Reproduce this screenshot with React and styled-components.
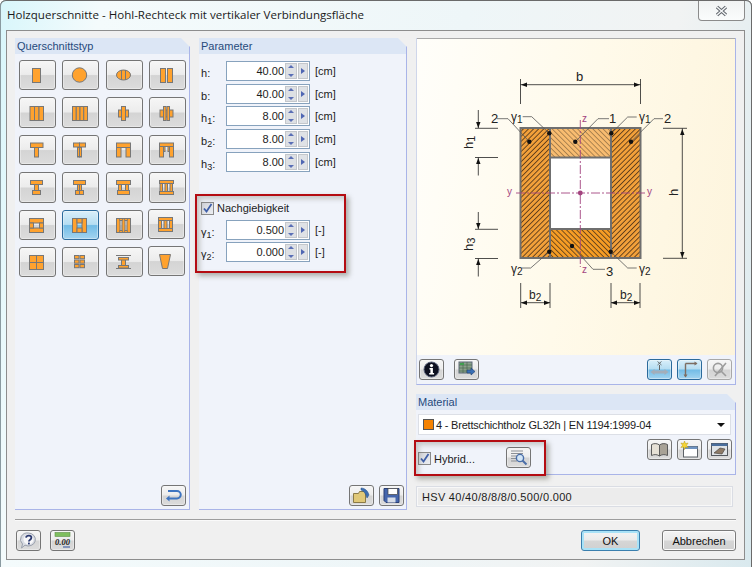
import styled, { createGlobalStyle } from "styled-components";

const GlobalStyle = createGlobalStyle`
  html, body { margin: 0; padding: 0; background: #fff; }
  body { font-family: "Liberation Sans", Arial, sans-serif; font-size: 11px; color: #1c1c1c; }
`;

const Window = styled.div`
  width: 752px;
  height: 567px;
  box-sizing: border-box;
  padding: 0 7px 7px 6px;
  display: flex;
  flex-direction: column;
  overflow: hidden;
  border-radius: 6px 6px 0 0;
  box-shadow: inset 0 1px 0 #6a6a6a, inset 1px 0 0 #8a9aa0, inset -1px 0 0 #6a6a6a;
  background: linear-gradient(100deg, #d8f6fb 0%, #f4fbfc 12%, #eef6f8 55%, #f1f3f3 80%, #d9e9ee 100%);
`;

const TitleBar = styled.div`
  height: 30px;
  flex: none;
  display: flex;
  align-items: flex-start;
  justify-content: space-between;
`;

const Title = styled.div`
  font-family: "Open Sans", "Noto Sans", sans-serif;
  font-size: 11.55px;
  line-height: 30px;
  margin-left: 1px;
  color: #1a1a1a;
`;

const CloseButton = styled.div`
  width: 45px;
  height: 19px;
  margin-top: 1px;
  display: flex;
  align-items: center;
  justify-content: center;
  border: 1px solid #8b8b8b;
  border-top: 0;
  border-radius: 0 0 4px 4px;
  background: linear-gradient(180deg, #f1f3f3, #fafcfc);
`;

const Content = styled.div`
  flex: 1;
  box-sizing: border-box;
  border: 1px solid #8d8d8d;
  background: #f0f0f0;
  padding: 7px 8px 8px;
  display: flex;
  flex-direction: column;
`;

const Columns = styled.div`
  height: 472px;
  display: grid;
  grid-template-columns: 175px 208px 320px;
  column-gap: 9px;
`;

const Panel = styled.section`
  position: relative;
  display: flex;
  flex-direction: column;
  min-height: 0;
  height: ${(p) => p.$h || "auto"};
  margin-top: ${(p) => p.$mt || 0}px;
`;

const PanelHead = styled.div`
  height: 16px;
  box-sizing: border-box;
  padding-left: 2px;
  line-height: 17px;
  color: #274a7c;
  background: #dce6f5;
  border-right: 1px solid #a9b4e8;
  clip-path: polygon(0 0, calc(100% - 9px) 0, 100% 9px, 100% 100%, 0 100%);
`;

const PanelBody = styled.div`
  flex: 1;
  display: flex;
  flex-direction: column;
  background: #f0f3fa;
  border-right: 1px solid #a9b4e8;
  border-bottom: 1px solid #a9b4e8;
  border-left: ${(p) => (p.$edge ? "1px solid #cfd6ea" : "0")};
  padding: ${(p) => p.$pad || "0"};
`;

const SectionGrid = styled.div`
  display: grid;
  grid-template-columns: repeat(4, 37px);
  grid-auto-rows: 30.4px;
  column-gap: 6.3px;
  row-gap: 7px;
`;

const ToolButton = styled.button`
  box-sizing: border-box;
  width: ${(p) => p.$w || 25}px;
  height: ${(p) => p.$h || 21}px;
  padding: 0;
  margin: ${(p) => p.$m || "0"};
  display: flex;
  align-items: center;
  justify-content: center;
  flex: none;
  border-radius: 3px;
  border: 1px solid ${(p) => (p.$active ? "#2b6a9c" : p.$faded ? "#a8a8a8" : "#757575")};
  box-shadow: inset 0 0 0 1px #fafafa66;
  background: ${(p) =>
    p.$active
      ? "linear-gradient(180deg, #d9effa 0%, #b5ddf2 48%, #72bce6 52%, #a3d4f0 100%)"
      : "linear-gradient(180deg, #f6f6f6 0%, #ececec 48%, #d4d4d4 52%, #dcdcdc 100%)"};
`;

const Foot = styled.div`
  margin-top: auto;
  display: flex;
  justify-content: flex-end;
  gap: 5px;
  padding: 0 ${(p) => p.$right || 3}px 3px 0;
`;

const Fields = styled.div`
  display: flex;
  flex-direction: column;
  gap: 2.7px;
`;

const FieldRow = styled.div`
  display: grid;
  grid-template-columns: 25px 84px auto;
  align-items: center;
  height: 20px;
`;

const Label = styled.span`
  padding-top: 4px;
  sub { font-size: 9px; line-height: 0; vertical-align: -2px; }
`;

const Unit = styled.span`
  margin-left: 5px;
`;

const Field = styled.div`
  box-sizing: border-box;
  height: 20px;
  display: flex;
  align-items: center;
  background: #fff;
  border: 1px solid #87a2bd;
`;

const Value = styled.span`
  width: 57px;
  text-align: right;
  flex: none;
`;

const Spin = styled.div`
  margin-left: 1px;
  width: 12px;
  height: 16px;
  display: flex;
  flex-direction: column;
  justify-content: space-between;
  border: 1px solid #c4c7cb;
  background: #dde0e4;
  align-items: center;
  padding: 1px 0;
  box-sizing: border-box;
`;

const SpinArrow = styled.i`
  width: 0;
  height: 0;
  border-left: 3px solid transparent;
  border-right: 3px solid transparent;
  ${(p) => (p.$down ? "border-top: 3px solid #5a6fb5;" : "border-bottom: 3px solid #5a6fb5;")}
`;

const Step = styled.div`
  margin-left: 1px;
  width: 10px;
  height: 16px;
  box-sizing: border-box;
  border: 1px solid #c4c7cb;
  background: #dfe2e6;
  display: flex;
  align-items: center;
  justify-content: center;
  &::before {
    content: "";
    border-top: 3px solid transparent;
    border-bottom: 3px solid transparent;
    border-left: 4px solid #4f66b3;
  }
`;

const CheckRow = styled.label`
  display: flex;
  align-items: center;
  gap: 3px;
  height: 13px;
  width: ${(p) => (p.$w ? `${p.$w}px` : "auto")};
  flex: none;
  margin: ${(p) => p.$m || "0"};
`;

const Box = styled.span`
  width: 13px;
  height: 13px;
  box-sizing: border-box;
  display: block;
  flex: none;
  border: 1px solid #8a8a8a;
  background: linear-gradient(135deg, #d2d4da, #eceef2);
`;

const Highlight = styled.div`
  position: absolute;
  box-sizing: border-box;
  left: ${(p) => p.$l}px;
  top: ${(p) => p.$t}px;
  width: ${(p) => p.$w}px;
  height: ${(p) => p.$h}px;
  border: 2px solid #b40c12;
  box-shadow: 3px 3px 5px rgba(70, 70, 50, 0.4), inset 3px 3px 5px rgba(70, 70, 50, 0.25);
  pointer-events: none;
`;

const Preview = styled.div`
  height: 317px;
  border-top: 1px solid #a9a9a9;
  box-sizing: border-box;
  background: linear-gradient(100deg, #fffefa 0%, #fffaea 50%, #fdf4dc 100%);
  svg { display: block; }
`;

const PreviewTools = styled.div`
  display: flex;
  padding: 4px 3px 0 2px;
`;

const ToolGroup = styled.div`
  display: flex;
  gap: ${(p) => p.$gap || 5}px;
  margin-left: ${(p) => (p.$end ? "auto" : "0")};
`;

const Select = styled.div`
  margin: 4px 4px 0 2px;
  height: 21px;
  box-sizing: border-box;
  display: flex;
  align-items: center;
  padding: 0 4px;
  background: #fff;
  border: 1px solid #dcdfe6;
  letter-spacing: -0.2px;
`;

const Swatch = styled.span`
  width: 11px;
  height: 11px;
  background: #f58200;
  border: 1px solid #555;
  box-sizing: border-box;
  margin-right: 2px;
`;

const Caret = styled.span`
  margin-left: auto;
  margin-right: 1px;
  border-left: 4px solid transparent;
  border-right: 4px solid transparent;
  border-top: 4px solid #111;
`;

const MaterialRow = styled.div`
  display: flex;
  margin: 4px 3px 0 2px;
  height: 29px;
`;

const HybridPart = styled.div`
  display: flex;
  flex: 1;
  align-items: flex-start;
`;

const Summary = styled.div`
  margin: 11px 3px 0 0;
  height: 21px;
  box-sizing: border-box;
  display: flex;
  align-items: center;
  padding-left: 5px;
  background: #ececec;
  border: 1px solid #dadde4;
  box-shadow: inset 0 0 0 1px #f8f8f8;
  letter-spacing: 0.3px;
`;

const Separator = styled.div`
  margin-top: 9px;
  height: 1px;
  background: #9d9d9d;
  border-bottom: 1px solid #fafafa;
`;

const Footer = styled.div`
  margin-top: 9px;
  display: flex;
  align-items: center;
  padding-left: 1px;
  gap: 9px;
`;

const DialogButton = styled.button`
  box-sizing: border-box;
  height: 21px;
  width: ${(p) => p.$w}px;
  margin-left: ${(p) => p.$ml || 0};
  font-family: "Liberation Sans", Arial, sans-serif;
  font-size: 11px;
  color: #111;
  padding: 0;
  border-radius: 3px;
  border: 1px solid ${(p) => (p.$primary ? "#3a7fae" : "#7b7b7b")};
  box-shadow: ${(p) => (p.$primary ? "inset 0 0 0 2px #a9e2f7" : "inset 0 0 0 1px #fbfbfb")};
  background: linear-gradient(180deg, #f4f4f4 0%, #ebebeb 48%, #d6d6d6 52%, #d0d0d0 100%);
`;

const ORANGE = "#ffa22e";
const GREY = "#777";

const rects = (list, fill = ORANGE) =>
  list.map(([x, y, w, h], i) => (
    <rect key={i} x={x} y={y} width={w} height={h} fill={fill} stroke={GREY} strokeWidth="1" />
  ));

const SECTIONS = [
  { draw: rects([[13.5, 8.5, 8, 14]]) },
  { draw: <circle cx="17.5" cy="15" r="7.2" fill={ORANGE} stroke={GREY} /> },
  {
    draw: (
      <>
        <ellipse cx="17.5" cy="15" rx="7" ry="5" fill={ORANGE} stroke={GREY} />
        <path d="M15.5 10v10M19.5 10v10" stroke={GREY} />
      </>
    ),
  },
  { draw: rects([[11.5, 8.5, 5, 14], [18.5, 8.5, 5, 14]]) },
  { draw: rects([[11, 8.5, 4.5, 14], [15.5, 8.5, 4.5, 14], [20, 8.5, 4.5, 14]]) },
  { draw: rects([[10.5, 8.5, 3.75, 14], [14.25, 8.5, 3.75, 14], [18, 8.5, 3.75, 14], [21.75, 8.5, 3.75, 14]]) },
  { draw: rects([[12.5, 12, 10, 7], [15.5, 8.5, 4, 14]]) },
  { draw: rects([[11, 12, 13, 7], [14.5, 8.5, 2.5, 14], [18, 8.5, 2.5, 14]]) },
  { draw: rects([[15.5, 12, 4, 10], [11.5, 8, 12.5, 4.5]]) },
  { draw: rects([[15.5, 12, 2, 10], [17.5, 12, 2, 10], [11.5, 8, 6, 4], [17.5, 8, 6, 4]]) },
  { draw: rects([[10.5, 12, 4.5, 10], [20, 12, 4.5, 10], [10.5, 8, 14, 4.5]]) },
  { draw: rects([[10.5, 11.5, 4, 10.5], [20.5, 11.5, 4, 10.5], [14.5, 11.5, 1.5, 5], [19, 11.5, 1.5, 5], [10.5, 8, 14, 3.5]]) },
  { draw: rects([[15.5, 12.5, 4, 6], [11.5, 8.5, 12, 4], [13.5, 18.5, 8, 4]]) },
  { draw: rects([[15.5, 12.5, 2, 6], [17.5, 12.5, 2, 6], [11.5, 8.5, 12, 4], [13.5, 18.5, 4, 4], [17.5, 18.5, 4, 4]]) },
  { draw: rects([[12.5, 12.5, 3, 6], [19.5, 12.5, 3, 6], [10.5, 8.5, 14, 4], [11.5, 18.5, 12, 4]]) },
  { draw: rects([[11, 11.5, 2.5, 8], [16, 11.5, 2.5, 8], [21, 11.5, 2.5, 8], [10.5, 8.5, 14, 3], [10.5, 19.5, 14, 3]]) },
  { draw: rects([[10.5, 8.5, 14, 4.5], [10.5, 18, 14, 4.5], [10.5, 13, 4, 5], [20.5, 13, 4, 5]]) },
  { draw: rects([[10.5, 8.5, 4.5, 14], [20, 8.5, 4.5, 14], [15, 8.5, 5, 4.5], [15, 18, 5, 4.5]]), active: true },
  { draw: rects([[10.5, 8.5, 3.5, 14], [21, 8.5, 3.5, 14], [16, 8.5, 3, 14], [14, 8.5, 2, 2], [19, 8.5, 2, 2], [14, 20.5, 2, 2], [19, 20.5, 2, 2]]) },
  { draw: rects([[10.5, 8.5, 14, 3], [10.5, 19.5, 14, 3], [10.5, 11.5, 3, 8], [16, 11.5, 3, 8], [21.5, 11.5, 3, 8]]), nudge: true },
  { draw: rects([[10.5, 8.5, 7, 7], [17.5, 8.5, 7, 7], [10.5, 15.5, 7, 7], [17.5, 15.5, 7, 7]]) },
  { draw: rects([[12.5, 8.5, 4.5, 3.2], [18, 8.5, 4.5, 3.2], [12.5, 13, 4.5, 3.2], [18, 13, 4.5, 3.2], [12.5, 17.5, 4.5, 3.2], [18, 17.5, 4.5, 3.2]]) },
  {
    draw: (
      <>
        {rects([[15.5, 11.5, 4, 8], [12.5, 10.5, 10, 2.5], [12.5, 18.5, 10, 2.5]])}
        <path d="M10 8.5h15M10 21.5h15" stroke={GREY} />
      </>
    ),
  },
  { draw: <path d="M11.5 8.5H22.5L19.5 22.5H14.5Z" fill={ORANGE} stroke={GREY} />, nudge: true },
];

const Icon = ({ children }) => (
  <svg width="19" height="17" viewBox="0 0 19 17">
    {children}
  </svg>
);

const InfoIcon = () => (
  <Icon>
    <circle cx="9.5" cy="8.5" r="7.5" fill="#0d1020" stroke="#59617a" />
    <circle cx="9.5" cy="4.6" r="1.6" fill="#fff" />
    <path d="M7.5 7h3.4v5h1.2v1.6H7.2V12h1.2V8.6H7.5z" fill="#fff" />
  </Icon>
);

const TableIcon = () => (
  <Icon>
    <rect x="2" y="1" width="13" height="11" fill="#8aa08a" stroke="#5e6a78" />
    <path d="M2 4h13M2 7h13M2 10h13M6 1v11M10 1v11" stroke="#4a6a52" strokeWidth=".7" />
    <rect x="3" y="2" width="4" height="2" fill="#3f9f4f" />
    <path d="M10 9h4v-2l4 3.5-4 3.5v-2h-4z" fill="#3a6fb5" stroke="#1f3f70" strokeWidth=".6" />
  </Icon>
);

const AxisIcon = () => (
  <Icon>
    <path d="M3 11h13" stroke="#a3aeba" strokeWidth="3" />
    <path d="M0.5 11l4-3v6zM18.5 11l-4-3v6z" fill="#a3aeba" />
    <path d="M9.5 4v5" stroke="#666" />
    <path d="M7.5 0.5l4 3.5M11.5 0.5l-4 3.5" stroke="#555" strokeWidth=".8" />
  </Icon>
);

const DimIcon = () => (
  <Icon>
    <path d="M5.5 2.5h11M5.5 2.5v13" stroke="#7c6d62" strokeWidth="1.4" />
    <path d="M17.5 2.5l-3-2v4zM5.5 16.5l-2-3h4z" fill="#7c6d62" />
  </Icon>
);

const OffIcon = () => (
  <Icon>
    <circle cx="8" cy="7" r="4.6" fill="none" stroke="#9c9c9c" strokeWidth="1.6" />
    <path d="M11 10l5 5M5 15L16 2" stroke="#9c9c9c" strokeWidth="1.6" />
  </Icon>
);

const BookIcon = () => (
  <Icon>
    <path d="M1.5 3.5c3-1.5 6-1 8 .5v11c-2-1.5-5-2-8-.5z" fill="#e6e1d6" stroke="#5a5a5a" />
    <path d="M17.5 3.5c-3-1.5-6-1-8 .5v11c2-1.5 5-2 8-.5z" fill="#a8a296" stroke="#5a5a5a" />
  </Icon>
);

const NewIcon = () => (
  <Icon>
    <rect x="3.5" y="5.5" width="14" height="10.5" fill="#fff" stroke="#5d6268" />
    <rect x="3.5" y="5.5" width="14" height="2.5" fill="#6f93c0" />
    <path d="M4.5 0l1 2.6 2.6-.6-1.6 2.3 1.6 2.3-2.6-.6-1 2.6-1-2.6-2.6.6 1.6-2.3L.9 2l2.6.6z" fill="#f7d634" stroke="#b59a1c" strokeWidth=".5" />
  </Icon>
);

const EditIcon = () => (
  <Icon>
    <rect x="1.5" y="2.5" width="16" height="12" fill="#dfe3e6" stroke="#55595e" />
    <rect x="1.5" y="2.5" width="16" height="2.5" fill="#4a6e9c" />
    <path d="M4 12l6-5 5 1-3 5z" fill="#8d7a66" stroke="#3f3a35" strokeWidth=".6" />
  </Icon>
);

const SearchIcon = () => (
  <Icon>
    <path d="M2 2h12M2 4.5h12M2 7h6M2 9.5h5M2 12h6" stroke="#8b8f95" />
    <circle cx="11" cy="9" r="3.6" fill="#d3e6f7" stroke="#4a6ea8" strokeWidth="1.4" />
    <path d="M13.5 11.5l4 4" stroke="#4a6ea8" strokeWidth="2" />
  </Icon>
);

const ReturnIcon = () => (
  <Icon>
    <path d="M4 4h9a3.6 3.6 0 0 1 0 7.5H4" fill="none" stroke="#3e74c0" strokeWidth="2" />
    <path d="M5.5 8.5L2 11.5l3.5 3z" fill="#3e74c0" />
  </Icon>
);

const FolderIcon = () => (
  <Icon>
    <path d="M1.5 6.5h5l1-2h6v11h-12z" fill="#e0c878" stroke="#8a7a48" />
    <path d="M9 1c4 0 7 3 8 7l-2 3c-1-4-3-7-6-8z" fill="#3c6db0" stroke="#25508a" strokeWidth=".5" />
  </Icon>
);

const SaveIcon = () => (
  <Icon>
    <path d="M2 1.5h15v14H4l-2-2z" fill="#4566ad" stroke="#2a3f75" />
    <rect x="6" y="1.5" width="9.5" height="6" fill="#fff" stroke="#444" strokeWidth=".7" />
    <rect x="5.5" y="10.5" width="8" height="5" fill="#d7dde8" />
  </Icon>
);

const HelpIcon = () => (
  <Icon>
    <path d="M9.5 1a7 6.5 0 1 1-3.5 12.2L2.5 16l1-4A7 6.5 0 0 1 9.5 1z" fill="#d9dce3" stroke="#9aa0ac" />
    <circle cx="9.5" cy="7.5" r="5" fill="#f7f7f9" />
    <path d="M7 5.6c.5-2.6 5.4-2.6 5.4.2 0 2-2.5 2-2.5 3.7" fill="none" stroke="#2b3a70" strokeWidth="1.8" />
    <rect x="9" y="10.6" width="1.8" height="1.8" fill="#2b3a70" />
  </Icon>
);

const DecimalsIcon = () => (
  <Icon>
    <rect x="2" y="0.5" width="15" height="4" fill="#7fbf5f" stroke="#5f8f48" strokeWidth=".6" />
    <text x="2" y="13" fontFamily="Liberation Serif, serif" fontStyle="italic" fontWeight="700" fontSize="8.5" fill="#222">0.00</text>
    <path d="M10 15h7" stroke="#2b4f9c" />
  </Icon>
);

const Checkbox = () => (
  <Box>
    <svg width="11" height="11" viewBox="0 0 11 11">
      <path d="M2 5.5l2.5 3L9.5 1" fill="none" stroke="#3f5fa8" strokeWidth="1.8" />
    </svg>
  </Box>
);

const SpinField = ({ label, sub, value, unit }) => (
  <FieldRow>
    <Label>
      {label}
      {sub && <sub>{sub}</sub>}:
    </Label>
    <Field>
      <Value>{value}</Value>
      <Spin>
        <SpinArrow />
        <SpinArrow $down />
      </Spin>
      <Step />
    </Field>
    <Unit>{unit}</Unit>
  </FieldRow>
);

const DIMENSIONS = [
  { label: "h", value: "40.00" },
  { label: "b", value: "40.00" },
  { label: "h", sub: "1", value: "8.00" },
  { label: "b", sub: "2", value: "8.00" },
  { label: "h", sub: "3", value: "8.00" },
];

const Dot = ({ x, y }) => <circle cx={x} cy={y} r="2.2" fill="#111" />;

const Leader = ({ d }) => <path d={d} fill="none" stroke="#555" strokeWidth=".8" />;

const ArrowH = ({ x, y, dir }) => <path d={`M${x} ${y}l${-6 * dir} -2.2v4.4z`} fill="#111" />;
const ArrowV = ({ x, y, dir }) => <path d={`M${x} ${y}l-2.2 ${-6 * dir}h4.4z`} fill="#111" />;

const Sym = ({ x, y, c, s, color = "#222", size = 12 }) => (
  <text x={x} y={y} fontFamily="Liberation Sans, sans-serif" fontSize={size} fill={color}>
    {c}
    {s && <tspan fontSize={size - 2} dy="1.5">{s}</tspan>}
  </text>
);

const Diagram = () => (
  <svg width="318" height="316" viewBox="417 39 318 316">
    <defs>
      <pattern id="hatchSide" patternUnits="userSpaceOnUse" width="3.6" height="3.6" patternTransform="rotate(45)">
        <rect width="3.6" height="3.6" fill="#f2a03a" />
        <rect width=".8" height="3.6" fill="#4a3018" />
      </pattern>
      <pattern id="hatchTop" patternUnits="userSpaceOnUse" width="3.6" height="3.6" patternTransform="rotate(-45)">
        <rect width="3.6" height="3.6" fill="#f8bc70" />
        <rect width=".8" height="3.6" fill="#9c7848" />
      </pattern>
      <pattern id="hatchBottom" patternUnits="userSpaceOnUse" width="3.6" height="3.6" patternTransform="rotate(-45)">
        <rect width="3.6" height="3.6" fill="#f59c24" />
        <rect width=".8" height="3.6" fill="#553a1c" />
      </pattern>
    </defs>

    <rect x="521" y="128.5" width="29" height="129" fill="url(#hatchSide)" />
    <rect x="611" y="128.5" width="29" height="129" fill="url(#hatchSide)" />
    <rect x="550" y="128.5" width="61" height="29" fill="url(#hatchTop)" />
    <rect x="550" y="229" width="61" height="29" fill="url(#hatchBottom)" />
    <rect x="550" y="157.5" width="61" height="71.5" fill="#fff" />
    <path d="M520.5 128h120v130h-120zM550 128v130M611 128v130M550 157.5h61M550 229h61" fill="none" stroke="#6f6f6f" strokeWidth="2" />

    <path d="M580.3 120V267M516 193h129" stroke="#a3437f" strokeWidth=".9" strokeDasharray="9 2 2 2" fill="none" />
    <circle cx="580.3" cy="193" r="2.4" fill="#a3437f" />
    <Sym x="507" y="195" c="y" color="#a3437f" size={10} />
    <Sym x="647" y="195" c="y" color="#a3437f" size={10} />
    <Sym x="582" y="122" c="z" color="#a3437f" size={10} />
    <Sym x="582" y="273" c="z" color="#a3437f" size={10} />

    <path d="M520.5 79v25M640.5 79v25M520.5 84.7h120" stroke="#222" strokeWidth=".8" fill="none" />
    <ArrowH x={521} y={84.7} dir={-1} />
    <ArrowH x={640} y={84.7} dir={1} />
    <Sym x="576" y="81" c="b" size={13} />

    <path d="M478.3 110v18M478.3 157.5v18M475 128.3h23M475 157.5h23M478.3 212v17M478.3 258.5v18M475 229.3h23M475 258.5h23" stroke="#222" strokeWidth=".8" fill="none" />
    <ArrowV x={478.3} y={128} dir={1} />
    <ArrowV x={478.3} y={158} dir={-1} />
    <ArrowV x={478.3} y={229} dir={1} />
    <ArrowV x={478.3} y={259} dir={-1} />
    <g transform="translate(473 149) rotate(-90)"><Sym x="0" y="0" c="h" s="1" size={13} /></g>
    <g transform="translate(473 251) rotate(-90)"><Sym x="0" y="0" c="h" s="3" size={13} /></g>

    <path d="M663 128.3h24M663 258.3h24M682.3 128.3v130" stroke="#222" strokeWidth=".8" fill="none" />
    <ArrowV x={682.3} y={129} dir={-1} />
    <ArrowV x={682.3} y={258} dir={1} />
    <g transform="translate(678 196) rotate(-90)"><Sym x="0" y="0" c="h" size={13} /></g>

    <path d="M520.7 283v25M550 283v25M611 283v25M640 283v25M521 302.7h29M611 302.7h29" stroke="#222" strokeWidth=".8" fill="none" />
    <ArrowH x={521} y={302.7} dir={-1} />
    <ArrowH x={550} y={302.7} dir={1} />
    <ArrowH x={611} y={302.7} dir={-1} />
    <ArrowH x={640} y={302.7} dir={1} />
    <Sym x="529" y="299" c="b" s="2" size={12} />
    <Sym x="620" y="299" c="b" s="2" size={12} />

    <Leader d="M497 118.7h11L529.3 141.7" />
    <Dot x={529.3} y={141.7} />
    <Sym x="491" y="123" c="2" size={13} />
    <Leader d="M522.7 116.7h9L549.3 133.3" />
    <Dot x={549.3} y={133.3} />
    <Sym x="511" y="121" c="γ" s="1" size={12} />
    <Leader d="M609 118.7h-11L575.3 141.7" />
    <Dot x={575.3} y={141.7} />
    <Sym x="609" y="123" c="1" size={13} />
    <Leader d="M636.7 117h-9L611.3 133.3" />
    <Dot x={611.3} y={133.3} />
    <Sym x="639" y="121" c="γ" s="1" size={12} />
    <Leader d="M663 118.7h-9L631 141.7" />
    <Dot x={631} y={141.7} />
    <Sym x="664" y="123" c="2" size={13} />

    <Leader d="M521.7 268h9L549.3 251.7" />
    <Dot x={549.3} y={251.7} />
    <Sym x="511" y="273" c="γ" s="2" size={12} />
    <Leader d="M636.7 268h-9L610.7 251.7" />
    <Dot x={610.7} y={251.7} />
    <Sym x="639" y="273" c="γ" s="2" size={12} />
    <Leader d="M605 269.3h-12L572 246" />
    <Dot x={572} y={246} />
    <Sym x="606" y="276" c="3" size={13} />
  </svg>
);

const App = () => (
  <Window>
    <GlobalStyle />
    <TitleBar>
      <Title>Holzquerschnitte - Hohl-Rechteck mit vertikaler Verbindungsfläche</Title>
      <CloseButton>
        <svg width="13" height="12" viewBox="0 0 13 12">
          <path d="M2 2l9 8M11 2l-9 8" stroke="#62676e" strokeWidth="3.4" />
          <path d="M2 2l9 8M11 2l-9 8" stroke="#f4f6f7" strokeWidth="1.4" />
        </svg>
      </CloseButton>
    </TitleBar>
    <Content>
      <Columns>
        <Panel>
          <PanelHead>Querschnittstyp</PanelHead>
          <PanelBody $pad="6px 0 0 4px">
            <SectionGrid>
              {SECTIONS.map((s, i) => (
                <ToolButton key={i} $w={37} $h={30.4} $active={s.active} $m={s.nudge ? "-1px 0 0 -1px" : "0"}>
                  <svg width="35" height="28" viewBox="1 1 35 28">
                    {s.draw}
                  </svg>
                </ToolButton>
              ))}
            </SectionGrid>
            <Foot>
              <ToolButton>
                <ReturnIcon />
              </ToolButton>
            </Foot>
          </PanelBody>
        </Panel>

        <Panel>
          <PanelHead>Parameter</PanelHead>
          <PanelBody $pad="7px 0 0 2px">
            <Fields>
              {DIMENSIONS.map((d, i) => (
                <SpinField key={i} {...d} unit="[cm]" />
              ))}
            </Fields>
            <CheckRow $m="30px 0 5px">
              <Checkbox />
              Nachgiebigkeit
            </CheckRow>
            <Fields>
              <SpinField label="γ" sub="1" value="0.500" unit="[-]" />
              <SpinField label="γ" sub="2" value="0.000" unit="[-]" />
            </Fields>
            <Foot $right={2}>
              <ToolButton>
                <FolderIcon />
              </ToolButton>
              <ToolButton>
                <SaveIcon />
              </ToolButton>
            </Foot>
          </PanelBody>
          <Highlight $l={-4} $t={156} $w={151} $h={79} />
        </Panel>

        <div>
          <Panel $h="347px">
            <PanelBody $edge>
              <Preview>
                <Diagram />
              </Preview>
              <PreviewTools>
                <ToolGroup $gap={10}>
                  <ToolButton>
                    <InfoIcon />
                  </ToolButton>
                  <ToolButton>
                    <TableIcon />
                  </ToolButton>
                </ToolGroup>
                <ToolGroup $end>
                  <ToolButton $active>
                    <AxisIcon />
                  </ToolButton>
                  <ToolButton $active>
                    <DimIcon />
                  </ToolButton>
                  <ToolButton $faded>
                    <OffIcon />
                  </ToolButton>
                </ToolGroup>
              </PreviewTools>
            </PanelBody>
          </Panel>

          <Panel $h="81px" $mt={9}>
            <PanelHead>Material</PanelHead>
            <PanelBody>
              <Select>
                <Swatch />4 - Brettschichtholz GL32h | EN 1194:1999-04
                <Caret />
              </Select>
              <MaterialRow>
                <HybridPart>
                  <CheckRow $w={88} $m="13px 0 0">
                    <Checkbox />
                    Hybrid...
                  </CheckRow>
                  <ToolButton $m="8px 0 0 0">
                    <SearchIcon />
                  </ToolButton>
                </HybridPart>
                <ToolGroup>
                  <ToolButton>
                    <BookIcon />
                  </ToolButton>
                  <ToolButton>
                    <NewIcon />
                  </ToolButton>
                  <ToolButton>
                    <EditIcon />
                  </ToolButton>
                </ToolGroup>
              </MaterialRow>
            </PanelBody>
            <Highlight $l={-2} $t={46} $w={132} $h={36} />
          </Panel>

          <Summary>HSV 40/40/8/8/8/0.500/0.000</Summary>
        </div>
      </Columns>
      <Separator />
      <Footer>
        <ToolButton>
          <HelpIcon />
        </ToolButton>
        <ToolButton>
          <DecimalsIcon />
        </ToolButton>
        <DialogButton $primary $w={59} $ml="auto">
          OK
        </DialogButton>
        <DialogButton $w={74} $ml="13px">
          Abbrechen
        </DialogButton>
      </Footer>
    </Content>
  </Window>
);

export default App;
